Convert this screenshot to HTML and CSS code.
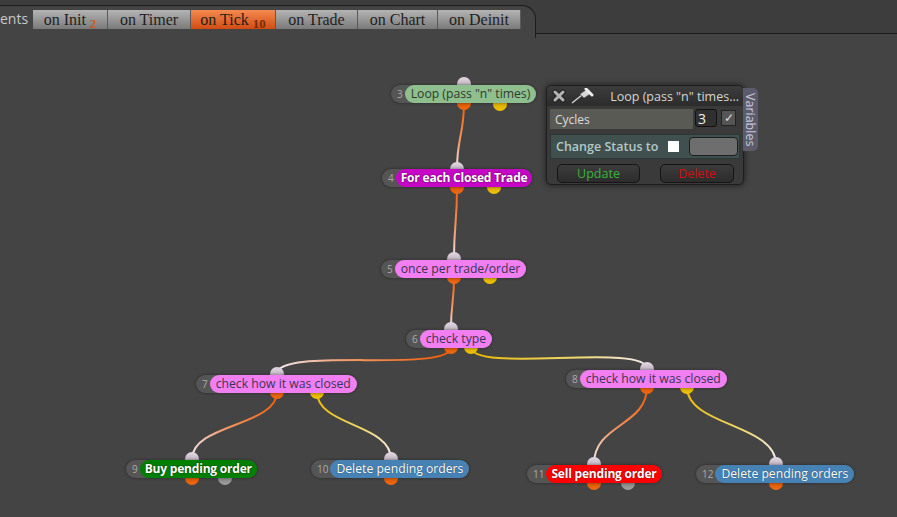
FILE: index.html
```html
<!DOCTYPE html>
<html>
    <head>
        <title>Strategy Builder</title>
        <meta charset="UTF-8">
        <link rel="stylesheet" href="styles.css">
    </head>
    <body>
        <header class="tabbar">
            <span class="events">ents</span>
            <div class="tabstrip">
                <div class="tab">on Init <sub>2</sub></div>
                <div class="tab">on Timer</div>
                <div class="tab active">on Tick <sub>10</sub></div>
                <div class="tab">on Trade</div>
                <div class="tab">on Chart</div>
                <div class="tab">on Deinit</div>
            </div>
            <div class="tabfill"></div>
        </header>

        <div class="canvas">
            <svg class="wires" width="897" height="483">
                <defs>
                    <linearGradient id="w1" gradientUnits="userSpaceOnUse" x1="464" y1="69" x2="457" y2="135"><stop offset="0" stop-color="#f05a00"/><stop offset="0.6" stop-color="#f39a6a"/><stop offset="1" stop-color="#f4eaf4"/></linearGradient>
                    <linearGradient id="w2" gradientUnits="userSpaceOnUse" x1="457" y1="153" x2="454" y2="225"><stop offset="0" stop-color="#f05a00"/><stop offset="0.6" stop-color="#f39a6a"/><stop offset="1" stop-color="#f4eaf4"/></linearGradient>
                    <linearGradient id="w3" gradientUnits="userSpaceOnUse" x1="454" y1="243" x2="451" y2="295"><stop offset="0" stop-color="#f05a00"/><stop offset="0.6" stop-color="#f39a6a"/><stop offset="1" stop-color="#f4eaf4"/></linearGradient>
                    <linearGradient id="w4" gradientUnits="userSpaceOnUse" x1="451" y1="313" x2="277" y2="340"><stop offset="0" stop-color="#f05a00"/><stop offset="0.6" stop-color="#f39a6a"/><stop offset="1" stop-color="#f4eaf4"/></linearGradient>
                    <linearGradient id="w5" gradientUnits="userSpaceOnUse" x1="471" y1="313" x2="647" y2="335"><stop offset="0" stop-color="#e8b800"/><stop offset="0.6" stop-color="#f0d870"/><stop offset="1" stop-color="#f4eaf4"/></linearGradient>
                    <linearGradient id="w6" gradientUnits="userSpaceOnUse" x1="277" y1="358" x2="192" y2="425"><stop offset="0" stop-color="#f05a00"/><stop offset="0.6" stop-color="#f39a6a"/><stop offset="1" stop-color="#f4eaf4"/></linearGradient>
                    <linearGradient id="w7" gradientUnits="userSpaceOnUse" x1="317" y1="358" x2="391" y2="425"><stop offset="0" stop-color="#e8b800"/><stop offset="0.6" stop-color="#f0d870"/><stop offset="1" stop-color="#f4eaf4"/></linearGradient>
                    <linearGradient id="w8" gradientUnits="userSpaceOnUse" x1="647" y1="353" x2="594" y2="430"><stop offset="0" stop-color="#f05a00"/><stop offset="0.6" stop-color="#f39a6a"/><stop offset="1" stop-color="#f4eaf4"/></linearGradient>
                    <linearGradient id="w9" gradientUnits="userSpaceOnUse" x1="687" y1="353" x2="776" y2="430"><stop offset="0" stop-color="#e8b800"/><stop offset="0.6" stop-color="#f0d870"/><stop offset="1" stop-color="#f4eaf4"/></linearGradient>
                    <linearGradient id="pin" x1="0" y1="0" x2="0" y2="1"><stop offset="0" stop-color="#e4dae4"/><stop offset="1" stop-color="#a494a4"/></linearGradient>
                    <linearGradient id="pout" x1="0" y1="0" x2="0" y2="1"><stop offset="0" stop-color="#c84a00"/><stop offset="1" stop-color="#f06a10"/></linearGradient>
                    <linearGradient id="pyel" x1="0" y1="0" x2="0" y2="1"><stop offset="0" stop-color="#c89800"/><stop offset="1" stop-color="#f0c400"/></linearGradient>
                    <linearGradient id="pgry" x1="0" y1="0" x2="0" y2="1"><stop offset="0" stop-color="#707070"/><stop offset="1" stop-color="#a0a0a0"/></linearGradient>
                </defs>

                <!-- wires -->
                <g fill="none" stroke-width="2">
                    <path d="M464 69 C464 100 457 104 457 135" stroke="url(#w1)"/>
                    <path d="M457 153 C457 190 454 190 454 225" stroke="url(#w2)"/>
                    <path d="M454 243 C454 270 451 268 451 295" stroke="url(#w3)"/>
                    <path d="M451 313 C451 340 277 312 277 340" stroke="url(#w4)"/>
                    <path d="M471 313 C471 340 647 308 647 335" stroke="url(#w5)"/>
                    <path d="M277 358 C277 392 192 390 192 425" stroke="url(#w6)"/>
                    <path d="M317 358 C317 392 391 390 391 425" stroke="url(#w7)"/>
                    <path d="M647 353 C647 392 594 390 594 430" stroke="url(#w8)"/>
                    <path d="M687 353 C687 392 776 390 776 430" stroke="url(#w9)"/>
                </g>

                <!-- ports -->
                <g fill="url(#pin)">
                    <circle cx="464" cy="50" r="7"/>
                    <circle cx="457" cy="135" r="7"/>
                    <circle cx="454" cy="225" r="7"/>
                    <circle cx="451" cy="295" r="7"/>
                    <circle cx="277" cy="340" r="7"/>
                    <circle cx="647" cy="335" r="7"/>
                    <circle cx="192" cy="425" r="7"/>
                    <circle cx="391" cy="425" r="7"/>
                    <circle cx="594" cy="430" r="7"/>
                    <circle cx="776" cy="430" r="7"/>
                </g>
                <g fill="url(#pout)">
                    <circle cx="464" cy="69" r="7"/>
                    <circle cx="457" cy="153" r="7"/>
                    <circle cx="454" cy="243" r="7"/>
                    <circle cx="451" cy="313" r="7"/>
                    <circle cx="277" cy="358" r="7"/>
                    <circle cx="647" cy="353" r="7"/>
                    <circle cx="192" cy="444" r="7"/>
                    <circle cx="391" cy="444" r="7"/>
                    <circle cx="594" cy="449" r="7"/>
                    <circle cx="776" cy="449" r="7"/>
                </g>
                <g fill="url(#pyel)">
                    <circle cx="500" cy="70" r="7"/>
                    <circle cx="494" cy="153" r="7"/>
                    <circle cx="490" cy="243" r="7"/>
                    <circle cx="471" cy="313" r="7"/>
                    <circle cx="317" cy="358" r="7"/>
                    <circle cx="687" cy="353" r="7"/>
                </g>
                <g fill="url(#pgry)">
                    <circle cx="225" cy="444" r="7"/>
                    <circle cx="628" cy="449" r="7"/>
                </g>
            </svg>

            <div class="node" style="left:391px; top:51px;"><span class="num">3</span><span class="label loop">Loop (pass "n" times)</span></div>
            <div class="node" style="left:382px; top:135px;"><span class="num">4</span><span class="label foreach">For each Closed Trade</span></div>
            <div class="node" style="left:381px; top:226px;"><span class="num">5</span><span class="label violet">once per trade/order</span></div>
            <div class="node" style="left:406px; top:296px;"><span class="num">6</span><span class="label violet">check type</span></div>
            <div class="node" style="left:196px; top:341px;"><span class="num">7</span><span class="label violet">check how it was closed</span></div>
            <div class="node" style="left:566px; top:336px;"><span class="num">8</span><span class="label violet">check how it was closed</span></div>
            <div class="node" style="left:126px; top:426px;"><span class="num">9</span><span class="label buy">Buy pending order</span></div>
            <div class="node" style="left:311px; top:426px;"><span class="num">10</span><span class="label del">Delete pending orders</span></div>
            <div class="node" style="left:527px; top:431px;"><span class="num">11</span><span class="label sell">Sell pending order</span></div>
            <div class="node" style="left:696px; top:431px;"><span class="num">12</span><span class="label del">Delete pending orders</span></div>

            <div class="panel">
                <div class="panel-head">
                    <svg class="icon" width="14" height="14" viewBox="0 0 14 14">
                        <path d="M3 3 L11 11 M11 3 L3 11" stroke="#222" stroke-width="5" stroke-linecap="round"/>
                        <path d="M3 3 L11 11 M11 3 L3 11" stroke="#b4b4b4" stroke-width="3" stroke-linecap="round"/>
                    </svg>
                    <svg class="icon" width="24" height="16" viewBox="0 0 24 16">
                        <path d="M2 15 L12 7" stroke="#ddd" stroke-width="1.3"/>
                        <path d="M10 6 L14 10 L20 6 L16 2 Z" fill="#d8d8d8" stroke="#555" stroke-width="0.6"/>
                        <path d="M16 1 L22 7" stroke="#eee" stroke-width="3" stroke-linecap="round"/>
                    </svg>
                    <span class="panel-title">Loop (pass "n" times...</span>
                </div>
                <div class="row cycles">
                    <span class="row-label">Cycles</span>
                </div>
                <div class="cycles-ctrl">
                    <span class="numbox">3</span>
                    <span class="tickbox">&#10003;</span>
                </div>
                <div class="row status">
                    <span class="row-label">Change Status to</span>
                    <span class="whitebox"></span>
                    <span class="graybox"></span>
                </div>
                <div class="buttons">
                    <div class="btn update">Update</div>
                    <div class="btn delete">Delete</div>
                </div>
                <div class="vartab">Variables</div>
            </div>
        </div>
    </body>
</html>
```

FILE: styles.css
```css
body{
    margin: 0;
    background-color: #444444;
    font-family: "Open Sans", "Noto Sans", sans-serif;
    overflow: hidden;
}
.tabbar{
    display: flex;
    align-items: flex-start;
    height: 34px;
    background-color: #3d3d3d;
    position: relative;
}
.events{
    position: absolute;
    left: 0;
    top: 9px;
    color: #c8c8c8;
    font-size: 14px;
    z-index: 1;
}
.tabstrip{
    display: flex;
    margin-top: 5px;
    width: 502px;
    height: 28px;
    padding: 4px 0 0 33px;
    box-sizing: content-box;
    background-color: #444444;
    border-top: 1px solid #1c1c1c;
    border-right: 1px solid #1c1c1c;
    border-top-right-radius: 14px;
}
.tabfill{
    flex: 1;
    height: 33px;
    border-bottom: 1px solid #1c1c1c;
}
.tab{
    height: 19px;
    line-height: 19px;
    padding: 0 9px;
    font-family: "Liberation Serif", "DejaVu Serif", serif;
    font-size: 16px;
    color: #1e1e1e;
    background: linear-gradient(#b4b4b4, #7a7a7a);
    border-right: 1px solid #5a5a5a;
    text-align: center;
    white-space: nowrap;
}
.tab:nth-child(1){ width: 56px; }
.tab:nth-child(2){ width: 64px; }
.tab:nth-child(3){ width: 66px; }
.tab:nth-child(4){ width: 63px; }
.tab:nth-child(5){ width: 61px; }
.tab:nth-child(6){ width: 64px; }
.tab sub{
    font-size: 13px;
    font-weight: bold;
    color: #c85a20;
    vertical-align: -3px;
    line-height: 0;
}
.tab.active{
    background: linear-gradient(#f48a50, #d24c12);
}
.tab.active sub{
    color: #7a2a08;
}
.canvas{
    position: relative;
    height: 483px;
}
.wires{
    position: absolute;
    left: 0;
    top: 0;
}
.node{
    position: absolute;
    display: flex;
    height: 18px;
    background-color: #555555;
    border-radius: 9px;
    box-shadow: 0 0 3px rgba(0,0,0,0.45);
}
.num{
    font-size: 10px;
    line-height: 18px;
    color: #aaaaaa;
    padding: 0 2px 0 6px;
}
.label{
    font-size: 12.2px;
    line-height: 18px;
    padding: 0 6px;
    border-radius: 9px;
    white-space: nowrap;
    color: #3a3454;
}
.label.loop{
    background-color: #8fbf8f;
    color: #2e3a2e;
}
.label.violet{
    background-color: #f27ff2;
}
.label.foreach, .label.buy, .label.sell{
    color: white;
    font-weight: bold;
    font-size: 12px;
    padding: 0 5px;
    letter-spacing: -0.2px;
}
.label.foreach{
    background-color: #c607c6;
    text-shadow: 0 0 2px #400040;
}
.label.buy{
    background-color: #008000;
    text-shadow: 0 0 2px #002000;
}
.label.sell{
    background-color: #ff0000;
    text-shadow: 0 0 2px #600000;
}
.label.del{
    background-color: #4682b4;
    color: white;
    text-shadow: 0 0 1px #1a3550;
}
.panel{
    position: absolute;
    left: 546px;
    top: 51px;
    width: 196px;
    height: 98px;
    background-color: #3a3a3a;
    border: 1px solid #1e1e1e;
    border-radius: 5px;
    box-shadow: 0 0 6px rgba(0,0,0,0.6);
    color: #dddddd;
    font-size: 12px;
}
.panel-head{
    display: flex;
    align-items: center;
    height: 20px;
    padding: 0 4px 0 5px;
    background: linear-gradient(#3c3c3c, #2c2c2c);
    border-radius: 5px 5px 0 0;
    gap: 4px;
}
.panel-title{
    margin-left: auto;
    color: #d6d6d6;
    font-size: 12.5px;
    white-space: nowrap;
}
.row{
    display: flex;
    align-items: center;
    margin: 0 3px;
}
.cycles{
    width: 138px;
    height: 20px;
    margin-top: 3px;
    padding-left: 5px;
    background-color: #5a5a55;
}
.cycles-ctrl{
    position: absolute;
    left: 148px;
    top: 23px;
    display: flex;
    gap: 4px;
}
.numbox{
    width: 22px;
    height: 18px;
    line-height: 18px;
    padding-left: 2px;
    box-sizing: border-box;
    background-color: #303030;
    border: 1px solid #111;
    border-radius: 3px;
    font-size: 14px;
    color: #eeeeee;
}
.tickbox{
    width: 13px;
    height: 14px;
    margin-top: 1px;
    line-height: 14px;
    text-align: center;
    background-color: #555;
    border: 1px solid #222;
    font-size: 12px;
    color: #dddddd;
}
.status{
    height: 23px;
    margin-top: 5px;
    padding-left: 5px;
    background-color: #3f504e;
    border: 1px solid #2a3836;
}
.status .row-label{
    color: #b4c8c8;
    font-size: 12.5px;
    font-weight: 600;
}
.whitebox{
    width: 11px;
    height: 11px;
    margin-left: 10px;
    background-color: white;
}
.graybox{
    width: 47px;
    height: 17px;
    margin-left: auto;
    margin-right: 1px;
    background-color: #6e6e6e;
    border: 1px solid #1e1e1e;
    border-radius: 4px;
}
.buttons{
    display: flex;
    justify-content: space-between;
    padding: 5px 9px 0 10px;
}
.btn{
    height: 17px;
    line-height: 17px;
    text-align: center;
    font-size: 12.5px;
    background: linear-gradient(#3c3c3c, #2c2c2c);
    border: 1px solid #151515;
    border-radius: 5px;
}
.btn.update{
    width: 81px;
    color: #3cb43c;
}
.btn.delete{
    width: 72px;
    color: #d01010;
}
.vartab{
    position: absolute;
    left: 196px;
    top: 2px;
    width: 15px;
    height: 63px;
    background-color: #5b5b6c;
    border-radius: 0 5px 5px 0;
    writing-mode: vertical-rl;
    text-align: center;
    line-height: 15px;
    font-size: 12.5px;
    color: #c8c8da;
}
```
